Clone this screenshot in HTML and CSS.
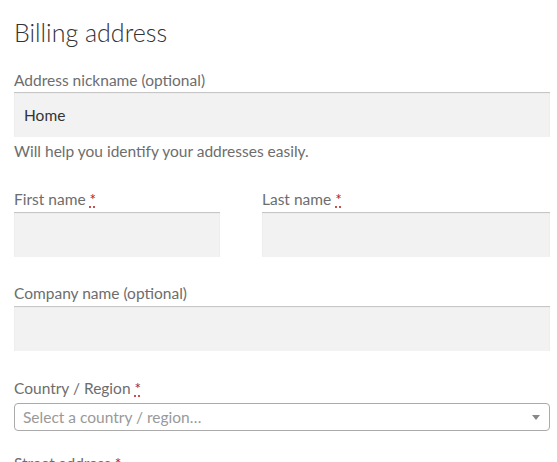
FILE: index.html
```html
<!DOCTYPE html>
<html lang="en">
<head>
<meta charset="utf-8">
<title>Billing address</title>
<link rel="stylesheet" href="styles.css">
</head>
<body>
<div class="form">
  <h2 class="title">Billing address</h2>
  <div class="field field-nick">
    <label class="label label-nick">Address nickname <span class="optional">(optional)</span></label>
    <div class="input input-filled">Home</div>
    <div class="desc">Will help you identify your addresses easily.</div>
  </div>
  <div class="row">
    <div class="field field-first">
      <label class="label">First name <abbr class="required" title="required">*</abbr></label>
      <div class="input"></div>
    </div>
    <div class="field field-last">
      <label class="label">Last name <abbr class="required" title="required">*</abbr></label>
      <div class="input"></div>
    </div>
  </div>
  <div class="field field-company">
    <label class="label">Company name <span class="optional">(optional)</span></label>
    <div class="input"></div>
  </div>
  <div class="field field-country">
    <label class="label label-select">Country / Region <abbr class="required" title="required">*</abbr></label>
    <div class="select">
      <span class="placeholder">Select a country / region…</span>
      <span class="arrow"></span>
    </div>
  </div>
  <div class="field field-street">
    <label class="label">Street address <abbr class="required" title="required">*</abbr></label>
    <div class="input"></div>
  </div>
</div>
</body>
</html>
```
FILE: styles.css
```css
html, body {
  margin: 0;
  padding: 0;
  background: #ffffff;
}
body {
  font-family: "Lato", "Liberation Sans", sans-serif;
  color: #6d6d6d;
  overflow: hidden;
}
.form {
  width: 536px;
  padding: 14px 0 0 14px;
}
.title {
  margin: 0;
  font-size: 25px;
  font-weight: 300;
  line-height: 36px;
  color: #333333;
}
.field {
  margin-top: 24px;
}
.field-nick {
  margin-top: 20px;
}
.field-company {
  margin-top: 26px;
}
.field-country {
  margin-top: 27px;
}
.field-street {
  margin-top: 22px;
}
.label {
  display: block;
  font-size: 15.5px;
  line-height: 20px;
  padding-bottom: 3px;
  color: #6d6d6d;
}
.label-nick {
  padding-bottom: 2px;
}
.label-select {
  padding-bottom: 5px;
}
.required {
  color: #b22222;
  text-decoration: underline dotted;
  text-underline-offset: 2px;
  cursor: help;
}
.input {
  box-sizing: border-box;
  height: 45px;
  background: #f2f2f2;
  box-shadow: inset 0 1px 1px rgba(0, 0, 0, 0.2);
  padding: 0 10px;
  font-size: 15.5px;
  line-height: 46px;
  color: #333333;
}
.desc {
  font-size: 15.5px;
  line-height: 20px;
  margin-top: 4px;
  color: #6d6d6d;
}
.row {
  display: flex;
  gap: 42px;
  margin-top: 28px;
}
.row .field {
  margin-top: 0;
}
.field-first {
  width: 206px;
}
.field-last {
  flex: 1;
}
.select {
  box-sizing: border-box;
  height: 28px;
  border: 1px solid #aaaaaa;
  border-radius: 4px;
  display: flex;
  align-items: center;
  justify-content: space-between;
  padding: 0 8px;
  font-size: 15.5px;
  color: #999999;
}
.arrow {
  width: 0;
  height: 0;
  border-style: solid;
  border-width: 5px 4px 0 4px;
  border-color: #888888 transparent transparent transparent;
  margin-right: 1px;
}
```
